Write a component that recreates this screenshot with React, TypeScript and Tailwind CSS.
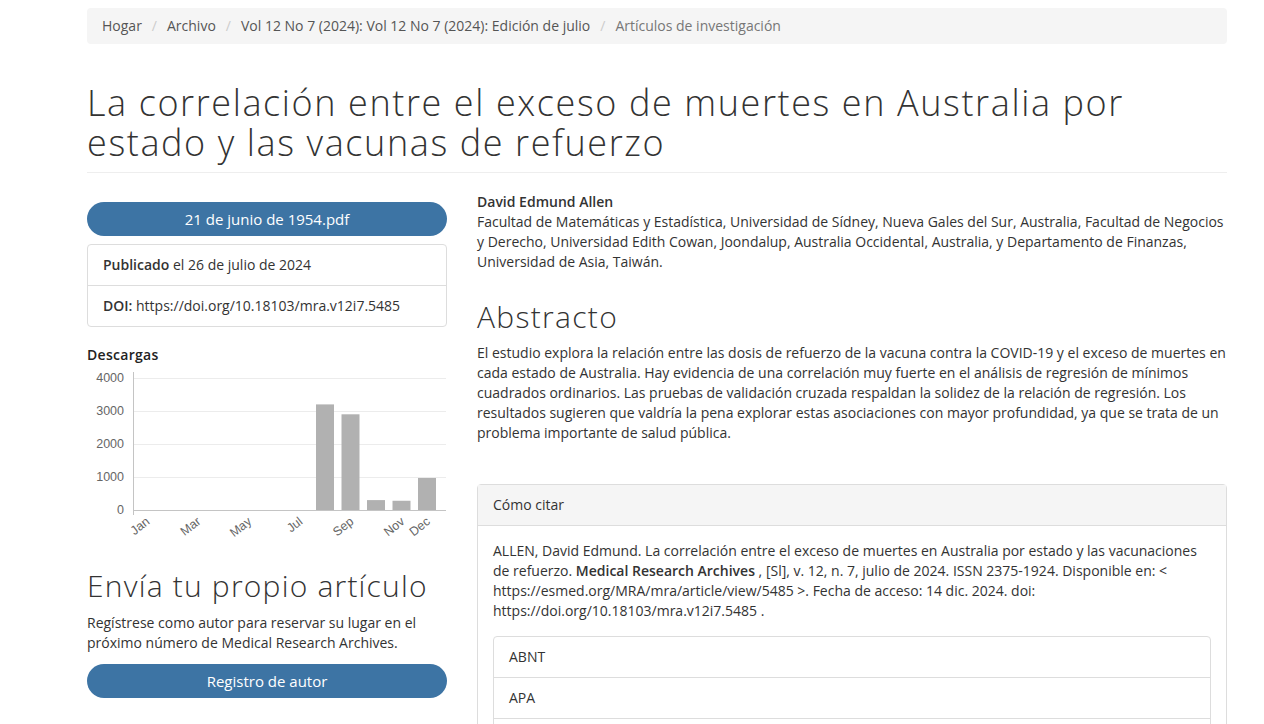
import React from 'react';

const crumbs = ['Hogar', 'Archivo', 'Vol 12 No 7 (2024): Vol 12 No 7 (2024): Edición de julio'];

const downloads = [0, 0, 0, 0, 0, 0, 0, 3200, 2900, 300, 280, 970];
const months = ['Jan', 'Feb', 'Mar', 'Apr', 'May', 'Jun', 'Jul', 'Aug', 'Sep', 'Oct', 'Nov', 'Dec'];
const shownMonths: { [i: number]: boolean } = { 0: true, 2: true, 4: true, 6: true, 8: true, 10: true, 11: true };

const DownloadsChart: React.FC = () => {
  // svg local coords: axis at x=46, grid to x=359, 4000 at y=8, 0 at y=140
  const x0 = 46;
  const x1 = 359;
  const yTop = 8;
  const yBot = 140;
  const barX = (i: number) => 229 + (i - 7) * 25.5;
  const scale = (v: number) => yBot - (v / 4000) * (yBot - yTop);
  return (
    <svg width="360" height="176" viewBox="0 0 360 176" className="block">
      {[0, 1000, 2000, 3000, 4000].map(v => (
        <g key={v}>
          <line x1={x0} x2={x1} y1={scale(v) + 0.5} y2={scale(v) + 0.5} stroke={v === 0 ? '#c4c4c4' : '#ececec'} strokeWidth="1" />
          <text x={x0 - 9} y={scale(v) + 4} textAnchor="end" fontSize="12.5" fill="#666" fontFamily="'Liberation Sans', Arial, sans-serif">{v}</text>
        </g>
      ))}
      <line x1={x0 + 0.5} x2={x0 + 0.5} y1={yTop - 6} y2={yBot + 5} stroke="#c4c4c4" strokeWidth="1" />
      {downloads.map((v, i) => v > 0 && (
        <rect key={i} x={barX(i)} y={scale(v)} width="18" height={yBot - scale(v)} fill="#b1b1b1" />
      ))}
      {months.map((m, i) => {
        if (!shownMonths[i]) return null;
        const tx = barX(i) + 13;
        const ty = yBot + 13;
        return (
          <text
            key={m}
            x={tx}
            y={ty}
            textAnchor="end"
            fontSize="12.5"
            fill="#666"
            fontFamily="'Liberation Sans', Arial, sans-serif"
            transform={`rotate(-38 ${tx} ${ty})`}
          >{m}</text>
        );
      })}
    </svg>
  );
};

const App: React.FC = () => {
  return (
    <div className="min-h-screen bg-white text-[#333] text-[14px] leading-[20px]" style={{ fontFamily: "'Open Sans', 'Noto Sans', sans-serif" }}>
      <div className="w-[1140px] ml-[87px] pt-2">
        <nav className="bg-[#f5f5f5] rounded px-[15px] h-9 flex items-center text-[14px] text-[#555]">
          {crumbs.map(c => (
            <span key={c} className="flex items-center">
              <span>{c}</span>
              <span className="text-[#ccc] px-[10px]">/</span>
            </span>
          ))}
          <span className="text-[#777]">Artículos de investigación</span>
        </nav>

        <h1 className="mt-[39px] text-[36px] leading-[40px] font-light text-[#333] tracking-[1.6px] pb-[9px] border-b border-[#eee]">
          La correlación entre el exceso de muertes en Australia por estado y las vacunas de refuerzo
        </h1>

        <div className="flex gap-[30px] mt-[19px]">
          <aside className="w-[360px] shrink-0 pt-[10px]">
            <a className="block h-[34px] rounded-full bg-[#3d74a4] text-white text-[15px] leading-[34px] text-center">21 de junio de 1954.pdf</a>
            <div className="mt-2 border border-[#ddd] rounded">
              <div className="px-[15px] h-[41px] flex items-center border-b border-[#ddd]">
                <span><strong className="font-semibold">Publicado</strong> el 26 de julio de 2024</span>
              </div>
              <div className="px-[15px] h-[40px] flex items-center">
                <span><strong className="font-semibold">DOI:</strong> https://doi.org/10.18103/mra.v12i7.5485</span>
              </div>
            </div>

            <h3 className="mt-[18px] text-[14px] font-semibold text-[#222] tracking-[0.3px]">Descargas</h3>
            <div className="mt-[5px]">
              <DownloadsChart />
            </div>

            <h2 className="mt-[22px] text-[30px] leading-[36px] font-light text-[#333] tracking-[1.2px]">Envía tu propio artículo</h2>
            <p className="mt-[9px]">Regístrese como autor para reservar su lugar en el próximo número de Medical Research Archives.</p>
            <a className="mt-[11px] block h-[34px] rounded-full bg-[#3d74a4] text-white text-[15px] leading-[34px] text-center">Registro de autor</a>
          </aside>

          <main className="flex-1">
            <div className="font-semibold">David Edmund Allen</div>
            <div>Facultad de Matemáticas y Estadística, Universidad de Sídney, Nueva Gales del Sur, Australia, Facultad de Negocios y Derecho, Universidad Edith Cowan, Joondalup, Australia Occidental, Australia, y Departamento de Finanzas, Universidad de Asia, Taiwán.</div>

            <h2 className="mt-[27px] text-[30px] leading-[36px] font-light text-[#333] tracking-[1.3px]">Abstracto</h2>
            <p className="mt-[8px]">El estudio explora la relación entre las dosis de refuerzo de la vacuna contra la COVID-19 y el exceso de muertes en cada estado de Australia. Hay evidencia de una correlación muy fuerte en el análisis de regresión de mínimos cuadrados ordinarios. Las pruebas de validación cruzada respaldan la solidez de la relación de regresión. Los resultados sugieren que valdría la pena explorar estas asociaciones con mayor profundidad, ya que se trata de un problema importante de salud pública.</p>

            <div className="mt-[41px] border border-[#ddd] rounded">
              <div className="bg-[#f5f5f5] border-b border-[#ddd] h-[41px] px-[15px] flex items-center">Cómo citar</div>
              <div className="p-[15px]">
                <p>
                  ALLEN, David Edmund. La correlación entre el exceso de muertes en Australia por estado y las vacunaciones de refuerzo. <strong className="font-semibold">Medical Research Archives</strong> , [Sl], v. 12, n. 7, julio de 2024. ISSN 2375-1924. Disponible en: &lt; https://esmed.org/MRA/mra/article/view/5485 &gt;. Fecha de acceso: 14 dic. 2024. doi: https://doi.org/10.18103/mra.v12i7.5485 .
                </p>
                <div className="mt-[15px] border border-[#ddd] rounded">
                  <div className="h-[41px] px-[15px] flex items-center border-b border-[#ddd]">ABNT</div>
                  <div className="h-[41px] px-[15px] flex items-center border-b border-[#ddd]">APA</div>
                  <div className="h-[41px] px-[15px] flex items-center">Chicago</div>
                </div>
              </div>
            </div>
          </main>
        </div>
      </div>
    </div>
  );
};

export default App;
